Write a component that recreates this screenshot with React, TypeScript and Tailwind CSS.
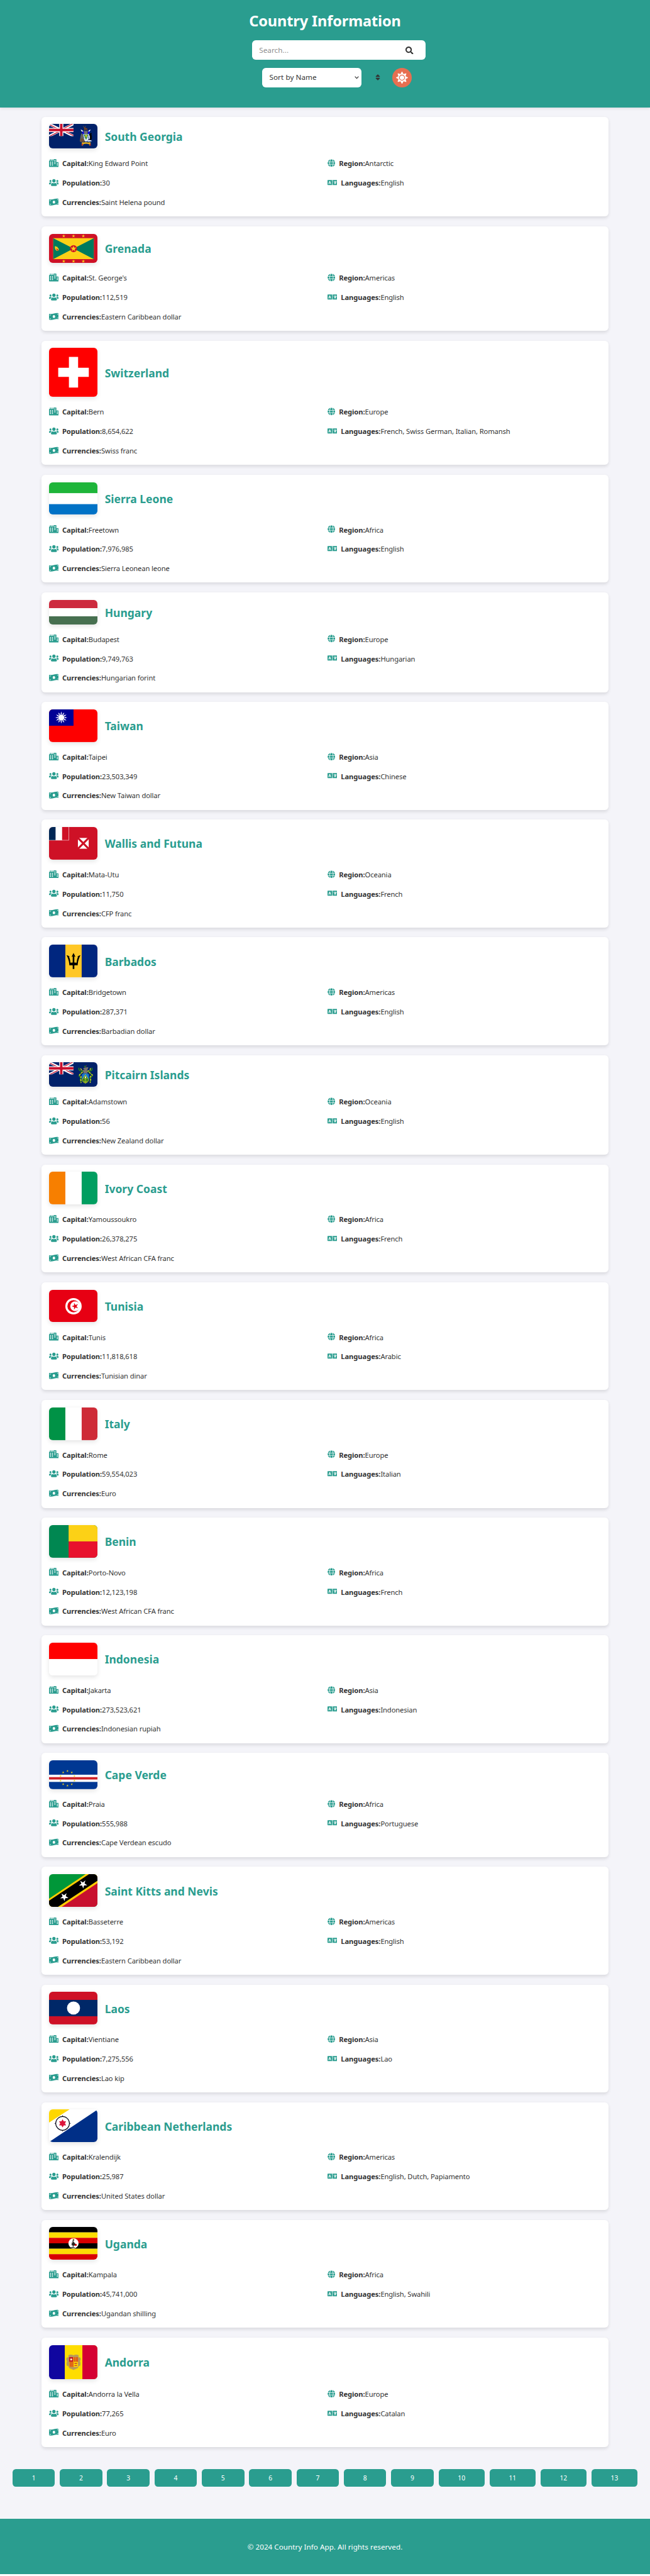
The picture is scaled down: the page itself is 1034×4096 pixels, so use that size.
import type { ReactNode } from "react";
import {
  FaCity,
  FaGlobe,
  FaLanguage,
  FaMoneyBillWave,
  FaSearch,
  FaSort,
  FaSun,
  FaUsers,
} from "react-icons/fa";

/* ---------- flag drawing helpers ---------- */

function starPoints(cx: number, cy: number, r: number, points = 5, inner = 0.382, rotate = 0) {
  const out: string[] = [];
  for (let i = 0; i < points * 2; i++) {
    const a = ((i * 180) / points - 90 + rotate) * (Math.PI / 180);
    const rad = i % 2 === 0 ? r : r * inner;
    out.push(`${(cx + rad * Math.cos(a)).toFixed(2)},${(cy + rad * Math.sin(a)).toFixed(2)}`);
  }
  return out.join(" ");
}

function Star(p: { x: number; y: number; r: number; fill: string; points?: number; inner?: number; rotate?: number }) {
  return <polygon points={starPoints(p.x, p.y, p.r, p.points, p.inner, p.rotate)} fill={p.fill} />;
}

function HStripes({ colors, w = 300, h = 200 }: { colors: string[]; w?: number; h?: number }) {
  const s = h / colors.length;
  return (
    <>
      {colors.map((c, i) => (
        <rect key={i} x={0} y={i * s} width={w} height={s + 0.3} fill={c} />
      ))}
    </>
  );
}

function VStripes({ colors }: { colors: string[] }) {
  return (
    <>
      {colors.map((c, i) => (
        <rect key={i} x={i * 100} y={0} width={100.3} height={200} fill={c} />
      ))}
    </>
  );
}

function BlueEnsign({ children }: { children: ReactNode }) {
  return (
    <>
      <rect width="428" height="214" fill="#012169" />
      <svg width="214" height="107" viewBox="0 0 60 30" preserveAspectRatio="none">
        <path d="M0 0 60 30M60 0 0 30" stroke="#fff" strokeWidth="6" />
        <path d="M0 1.2 30 16.2M60 28.8 30 13.8M58 0 30 14M2 30 30 16" stroke="#C8102E" strokeWidth="2" />
        <path d="M30 0V30M0 15H60" stroke="#fff" strokeWidth="10" />
        <path d="M30 0V30M0 15H60" stroke="#C8102E" strokeWidth="6" />
      </svg>
      {children}
    </>
  );
}

type Flag = { box: string; art: ReactNode };

const flags: Record<string, Flag> = {
  gs: {
    box: "0 0 428 214",
    art: (
      <BlueEnsign>
        <path d="M300 18q2 14 10 16 10-2 13-16M306 20v9M317 20v9" fill="none" stroke="#7a5530" strokeWidth="3" />
        <path d="M305 32l8-3 6 8h14l2 24h-5l-2-12h-10l-2 14h-5z" fill="#7b4420" />
        <path d="M276 50l12 4 12 10-4 6-12-6zM364 50l-12 4-10 10 4 6 10-6z" fill="#fff" />
        <path d="M292 66h12v22h-14zM340 66h16l-2 22h-12z" fill="#1008f0" />
        <path d="M304 62h34l-2 26h-30z" fill="#6d6a72" />
        <path d="M298 88h52l-2 40q-6 22-25 28-18-6-23-28z" fill="#dfe8f5" />
        <path d="M300 92h50M300 106h50M302 120h46" stroke="#1b4fb5" strokeWidth="6" strokeDasharray="6 6" />
        <path d="M304 94l20 46 18-46z" fill="#2c8a2c" />
        <path d="M314 96l10 26 10-26z" fill="#e9d12c" />
        <path d="M283 82q12 0 12 14l14 44q6 14-2 16h-34q-8-6-2-20l6-34z" fill="#66635f" />
        <path d="M272 134q18-12 30 2l10 20h-34q-10-8-6-22z" fill="#705036" />
        <path d="M352 88q8-10 20-8 4 6-2 8 8 24 4 44l-14 14q-12-10-8-30z" fill="#050505" />
        <path d="M353 96q8 14 2 44-8-16-2-44zM340 144q20-6 36 6-20 6-42 4z" fill="#fff" />
        <path d="M284 168q4-10 18-6 20-6 42 0 14-6 22 4l-6 8 6 12-12 4-6-14q-24-6-46 0l-6 14-14-4 8-10z" fill="#e7b21c" />
        <path d="M283 184l9-12 6 6-8 14zM367 184l-9-12-6 6 8 14z" fill="#c5281c" />
      </BlueEnsign>
    ),
  },
  gd: {
    box: "0 0 500 300",
    art: (
      <>
        <rect width="500" height="300" fill="#CE1126" />
        <rect x="43" y="43" width="414" height="214" fill="#FCD116" />
        <path d="M43 43 250 150 43 257zM457 43 250 150 457 257z" fill="#007A5E" />
        <circle cx="250" cy="150" r="36" fill="#CE1126" />
        <Star x={250} y={150} r={32} fill="#FCD116" />
        {[150, 250, 350].map((x) => (
          <g key={x}>
            <Star x={x} y={21} r={18} fill="#FCD116" />
            <Star x={x} y={279} r={18} fill="#FCD116" />
          </g>
        ))}
        <path d="M60 124q40 12 40 38-6 12-22 10-22-12-18-48z" fill="#FCD116" />
        <path d="M75 148q20 8 18 22-18 0-18-22z" fill="#CE1126" />
      </>
    ),
  },
  ch: {
    box: "0 0 320 320",
    art: (
      <>
        <rect width="320" height="320" fill="#FF0000" />
        <path d="M130 60h60v70h70v60h-70v70h-60v-70H60v-60h70z" fill="#fff" />
      </>
    ),
  },
  sl: { box: "0 0 300 200", art: <HStripes colors={["#1EB53A", "#FFFFFF", "#0072C6"]} /> },
  hu: { box: "0 0 400 200", art: <HStripes w={400} colors={["#CD2A3E", "#FFFFFF", "#477050"]} /> },
  tw: {
    box: "0 0 300 200",
    art: (
      <>
        <rect width="300" height="200" fill="#FE0000" />
        <rect width="150" height="100" fill="#000095" />
        <Star x={75} y={50} r={37} fill="#fff" points={12} inner={0.52} />
        <circle cx="75" cy="50" r="20" fill="#fff" stroke="#000095" strokeWidth="3" />
      </>
    ),
  },
  wf: {
    box: "0 0 300 200",
    art: (
      <>
        <rect width="300" height="200" fill="#CE1126" />
        <rect width="122" height="82" fill="#fff" />
        <rect width="40" height="80" fill="#002654" />
        <rect x="80" width="40" height="80" fill="#CE1126" />
        <rect x="177" y="67" width="66" height="66" fill="#fff" />
        <path d="M175 65l70 70M245 65l-70 70" stroke="#CE1126" strokeWidth="12" />
      </>
    ),
  },
  bb: {
    box: "0 0 300 200",
    art: (
      <>
        <VStripes colors={["#00267F", "#FFC726", "#00267F"]} />
        <path
          d="M150 51l12 24-7-3v38q8 0 14 1 2-28 10-36l-7 1q8-8 21-11-16 28-18 62-12-2-20 0v22h-10v-22q-8-2-20 0-2-34-18-62 13 3 21 11l-7-1q8 8 10 36 6-1 14-1V72l-7 3z"
          fill="#000"
        />
      </>
    ),
  },
  pn: {
    box: "0 0 428 214",
    art: (
      <BlueEnsign>
        <path
          d="M262 48q-6 22 16 28l20 2-24 22-10 14q-4 16 20 20l-12 20 10 22M374 48q8 22-14 28l-20 2 24 22 12 14q4 16-22 20l12 20-10 22"
          fill="none"
          stroke="#2a7a22"
          strokeWidth="10"
        />
        <path
          d="M276 54l8 12 22 12-22 16-18 18 14 10-2 24 2 36M362 52l-4 18-20 8 20 16 22 18-18 12 2 22-4 34"
          fill="none"
          stroke="#f2df1e"
          strokeWidth="7"
          strokeDasharray="18 9"
        />
        <path d="M298 58q8-14 26-12l20-4-4 14-8 16 6 26h-40q8-14-2-22l14-10z" fill="#77716b" />
        <path d="M304 38q10-14 22-4l-8 10z" fill="#2a7a22" />
        <path d="M322 28l10 3-6 5z" fill="#d22" />
        <path d="M288 104q30-12 60 0v40q-4 28-30 40-26-12-30-40z" fill="#1778d2" />
        <path d="M318 108l30 48q-8 20-30 28-22-8-30-28z" fill="#2a7a22" stroke="#f2df1e" strokeWidth="4" />
        <path d="M318 130v44M306 144h24M304 160q4 14 14 15 10-1 14-15" fill="none" stroke="#f2df1e" strokeWidth="4" />
        <rect x="313" y="124" width="10" height="13" fill="#fff" />
      </BlueEnsign>
    ),
  },
  ci: { box: "0 0 300 200", art: <VStripes colors={["#F77F00", "#FFFFFF", "#009E60"]} /> },
  tn: {
    box: "0 0 300 200",
    art: (
      <>
        <rect width="300" height="200" fill="#E70013" />
        <circle cx="150" cy="100" r="50" fill="#fff" />
        <circle cx="150" cy="100" r="37.5" fill="#E70013" />
        <circle cx="160" cy="100" r="30" fill="#fff" />
        <Star x={160} y={100} r={22} fill="#E70013" rotate={-90} />
      </>
    ),
  },
  it: { box: "0 0 300 200", art: <VStripes colors={["#009246", "#FFFFFF", "#CE2B37"]} /> },
  bj: {
    box: "0 0 300 200",
    art: (
      <>
        <rect width="300" height="200" fill="#008751" />
        <rect x="120" width="180" height="100" fill="#FCD116" />
        <rect x="120" y="100" width="180" height="100" fill="#E8112D" />
      </>
    ),
  },
  id: { box: "0 0 300 200", art: <HStripes colors={["#FF0000", "#FFFFFF"]} /> },
  cv: {
    box: "0 0 510 300",
    art: (
      <>
        <rect width="510" height="300" fill="#003893" />
        <rect y="150" width="510" height="75" fill="#fff" />
        <rect y="175" width="510" height="25" fill="#CF2027" />
        {Array.from({ length: 10 }, (_, i) => {
          const a = (i * 36 * Math.PI) / 180;
          return <Star key={i} x={192 + 76 * Math.sin(a)} y={188 - 76 * Math.cos(a)} r={13} fill="#F7D116" />;
        })}
      </>
    ),
  },
  kn: {
    box: "0 0 300 200",
    art: (
      <>
        <rect width="300" height="200" fill="#009739" />
        <path d="M300 0V200H0z" fill="#C8102E" />
        <path d="M0 150 224 0H300V53L78 200H0z" fill="#FFCD00" />
        <path d="M0 163 245 0H300V38L55 200H0z" fill="#000" />
        <Star x={93} y={139} r={27} fill="#fff" rotate={177} />
        <Star x={208} y={61} r={27} fill="#fff" rotate={177} />
      </>
    ),
  },
  la: {
    box: "0 0 300 200",
    art: (
      <>
        <rect width="300" height="200" fill="#CE1126" />
        <rect y="50" width="300" height="100" fill="#002868" />
        <circle cx="150" cy="100" r="40" fill="#fff" />
      </>
    ),
  },
  bq: {
    box: "0 0 300 200",
    art: (
      <>
        <rect width="300" height="200" fill="#fff" />
        <path d="M0 0H126L0 81z" fill="#FFD700" />
        <path d="M300 0V200H0z" fill="#002F87" />
        <circle cx="83" cy="86" r="42" fill="#fff" stroke="#0b0b1c" strokeWidth="4.5" />
        <path d="M83 36l5 9H78zM83 136l5-9H78zM33 86l9-5v10zM133 86l-9-5v10z" fill="#0b0b1c" />
        <Star x={83} y={86} r={25} fill="#DC143C" points={6} inner={0.577} />
      </>
    ),
  },
  ug: {
    box: "0 0 300 200",
    art: (
      <>
        <HStripes colors={["#000000", "#FCDC04", "#D90000", "#000000", "#FCDC04", "#D90000"]} />
        <circle cx="150" cy="100" r="31" fill="#fff" />
        <path
          d="M146 78q5-4 9 1l-1 5-5-1q-2 6 4 10l6 8q6 2 7 8l-9 5-7 1-1 8h8v4h-22v-3l10-1 1-8q-8-2-10-9l6 1-6-8 7 2-5-9 8 4q-4-9 0-18z"
          fill="#26211f"
        />
        <path d="M144 71l10 1-3 6h-5z" fill="#d9b400" />
        <path d="M158 108q10-8 12 0 0 10-6 8l-8-2z" fill="#D90000" />
      </>
    ),
  },
  ad: {
    box: "0 0 320 224",
    art: (
      <>
        <rect width="320" height="224" fill="#10069F" />
        <rect x="103" width="217" height="224" fill="#FEDD00" />
        <rect x="218" width="102" height="224" fill="#D50032" />
        <path
          d="M126 66q16-8 34 0 18-8 34 0l-2 12 14 4q4 14-4 22 6 14 2 30l-12 4q0 14-16 16l-16 8-16-8q-16-2-16-16l-12-4q-4-16 2-30-8-8-4-22l14-4z"
          fill="#B89A5B"
        />
        <rect x="131" y="78" width="58" height="64" rx="4" fill="#FEDD00" />
        <path d="M131 78h28v31h-28z" fill="#C81428" />
        <circle cx="145" cy="93" r="7" fill="#f4e6a8" />
        <path d="M136 109v32M143 109v33M150 109v33M157 109v33M166 78v31M173 78v31M180 78v31M186 78v31" stroke="#C81428" strokeWidth="4" />
        <path d="M166 116h18v6h-18zM166 130h18v6h-18z" fill="#C8402a" />
      </>
    ),
  },
};

const flagHeights: Record<string, string> = {
  gs: "h-[38.94px]",
  gd: "h-[46.73px]",
  ch: "h-[77.88px]",
  hu: "h-[38.94px]",
  pn: "h-[38.94px]",
  cv: "h-[45.81px]",
  ad: "h-[54.5px]",
};

/* ---------- data ---------- */

type Country = {
  flag: string;
  name: string;
  capital: string;
  region: string;
  population: string;
  languages: string;
  currencies: string;
};

const c = (
  flag: string,
  name: string,
  capital: string,
  region: string,
  population: string,
  languages: string,
  currencies: string,
): Country => ({ flag, name, capital, region, population, languages, currencies });

const countries: Country[] = [
  c("gs", "South Georgia", "King Edward Point", "Antarctic", "30", "English", "Saint Helena pound"),
  c("gd", "Grenada", "St. George's", "Americas", "112,519", "English", "Eastern Caribbean dollar"),
  c("ch", "Switzerland", "Bern", "Europe", "8,654,622", "French, Swiss German, Italian, Romansh", "Swiss franc"),
  c("sl", "Sierra Leone", "Freetown", "Africa", "7,976,985", "English", "Sierra Leonean leone"),
  c("hu", "Hungary", "Budapest", "Europe", "9,749,763", "Hungarian", "Hungarian forint"),
  c("tw", "Taiwan", "Taipei", "Asia", "23,503,349", "Chinese", "New Taiwan dollar"),
  c("wf", "Wallis and Futuna", "Mata-Utu", "Oceania", "11,750", "French", "CFP franc"),
  c("bb", "Barbados", "Bridgetown", "Americas", "287,371", "English", "Barbadian dollar"),
  c("pn", "Pitcairn Islands", "Adamstown", "Oceania", "56", "English", "New Zealand dollar"),
  c("ci", "Ivory Coast", "Yamoussoukro", "Africa", "26,378,275", "French", "West African CFA franc"),
  c("tn", "Tunisia", "Tunis", "Africa", "11,818,618", "Arabic", "Tunisian dinar"),
  c("it", "Italy", "Rome", "Europe", "59,554,023", "Italian", "Euro"),
  c("bj", "Benin", "Porto-Novo", "Africa", "12,123,198", "French", "West African CFA franc"),
  c("id", "Indonesia", "Jakarta", "Asia", "273,523,621", "Indonesian", "Indonesian rupiah"),
  c("cv", "Cape Verde", "Praia", "Africa", "555,988", "Portuguese", "Cape Verdean escudo"),
  c("kn", "Saint Kitts and Nevis", "Basseterre", "Americas", "53,192", "English", "Eastern Caribbean dollar"),
  c("la", "Laos", "Vientiane", "Asia", "7,275,556", "Lao", "Lao kip"),
  c("bq", "Caribbean Netherlands", "Kralendijk", "Americas", "25,987", "English, Dutch, Papiamento", "United States dollar"),
  c("ug", "Uganda", "Kampala", "Africa", "45,741,000", "English, Swahili", "Ugandan shilling"),
  c("ad", "Andorra", "Andorra la Vella", "Europe", "77,265", "Catalan", "Euro"),
];

/* ---------- page pieces ---------- */

function Detail({ icon, label, value }: { icon: ReactNode; label: string; value: string }) {
  return (
    <div className="flex h-[30.8px] items-center gap-[5.8px]">
      <span className="shrink-0 text-[#2A9D8F]">{icon}</span>
      <p className="pt-[1.4px] text-[11.2px] leading-none tracking-[-0.11px] whitespace-nowrap">
        <strong className="font-bold tracking-[-0.07px]">{label}</strong>
        {value}
      </p>
    </div>
  );
}

const wideIcon = "block h-[12.5px] w-[15.6px]";

function CountryCard({ country }: { country: Country }) {
  const flag = flags[country.flag];
  return (
    <article className="rounded-[5.8px] bg-white px-[11.67px] pt-[11.67px] pb-[8px] shadow-[0_2.4px_4.9px_rgba(0,0,0,0.1)]">
      <div className="flex items-center gap-[11.2px]">
        <svg
          className={`block w-[77.9px] shrink-0 rounded-[5.8px] shadow-[0_2.4px_7px_rgba(0,0,0,0.1)] ${flagHeights[country.flag] ?? "h-[51.92px]"}`}
          viewBox={flag.box}
          preserveAspectRatio="none"
        >
          {flag.art}
        </svg>
        <h2 className="pt-[2.6px] text-[17.5px] leading-none font-bold whitespace-nowrap text-[#2A9D8F]">{country.name}</h2>
      </div>
      <div className="mt-[7.6px] grid grid-cols-2 gap-x-[7.8px]">
        <Detail icon={<FaCity className={wideIcon} />} label="Capital:" value={country.capital} />
        <Detail icon={<FaGlobe className="block size-[12.5px]" />} label="Region:" value={country.region} />
        <Detail icon={<FaUsers className={wideIcon} />} label="Population:" value={country.population} />
        <Detail icon={<FaLanguage className={wideIcon} />} label="Languages:" value={country.languages} />
        <Detail icon={<FaMoneyBillWave className={wideIcon} />} label="Currencies:" value={country.currencies} />
      </div>
    </article>
  );
}

function Header() {
  return (
    <header className="flex h-[170.6px] flex-col items-center bg-[#2A9D8F] pt-[20.5px] shadow-[0_2.4px_4.9px_rgba(0,0,0,0.1)]">
      <h1 className="text-[23.6px] leading-[24px] font-bold tracking-[-0.15px] text-white">Country Information</h1>
      <div className="mt-[19.8px] pl-[44px]">
        <div className="flex h-[31px] w-[276px] items-center justify-between rounded-[5.8px] bg-white pr-[19.5px] pl-[11.2px]">
          <span className="text-[11.67px] leading-none tracking-[0.07px] text-[#8e8e8e]">Search...</span>
          <FaSearch className="size-[12.5px]" />
        </div>
      </div>
      <div className="mt-[12.4px] flex items-center pl-[38.7px]">
        <div className="flex h-[31px] w-[157.4px] items-center justify-between rounded-[5.8px] bg-white pr-[3.6px] pl-[11.2px]">
          <span className="text-[11.67px] leading-none tracking-[0.07px]">Sort by Name</span>
          <svg className="h-[4.6px] w-[7px]" viewBox="0 0 12 8" fill="none" stroke="#333" strokeWidth="2">
            <path d="M1 1l5 5.4L11 1" />
          </svg>
        </div>
        <FaSort className="ml-[20.5px] size-[12px]" />
        <div className="ml-[17px] flex size-[31.1px] items-center justify-center rounded-full bg-[#E76F51] text-white">
          <FaSun className="size-[19px]" />
        </div>
      </div>
    </header>
  );
}

export default function App() {
  return (
    <div className="min-h-[4096px] bg-white font-['Noto_Sans','Open_Sans',sans-serif] text-[#333]">
      <div className="flex h-[4093.2px] flex-col bg-[#F4F4F9]">
        <Header />
        <main className="mt-[15.15px] flex flex-col gap-[15.58px] pr-[65.9px] pl-[65.9px]">
          {countries.map((country) => (
            <CountryCard key={country.flag} country={country} />
          ))}
        </main>
        <nav className="mt-[34.9px] flex justify-center gap-[7.8px]">
          {Array.from({ length: 13 }, (_, i) => (
            <button
              key={i}
              className={`flex h-[28.3px] items-center justify-center rounded-[5.2px] bg-[#2A9D8F] pt-px text-[10.3px] leading-none text-white ${i < 9 ? "w-[67.5px]" : "w-[73.3px]"}`}
            >
              {i + 1}
            </button>
          ))}
        </nav>
        <footer className="mt-auto flex h-[88.3px] items-center justify-center bg-[#2A9D8F] pt-[2px] text-[11.67px] leading-none tracking-[0.04px] text-white">
          © 2024 Country Info App. All rights reserved.
        </footer>
      </div>
    </div>
  );
}
